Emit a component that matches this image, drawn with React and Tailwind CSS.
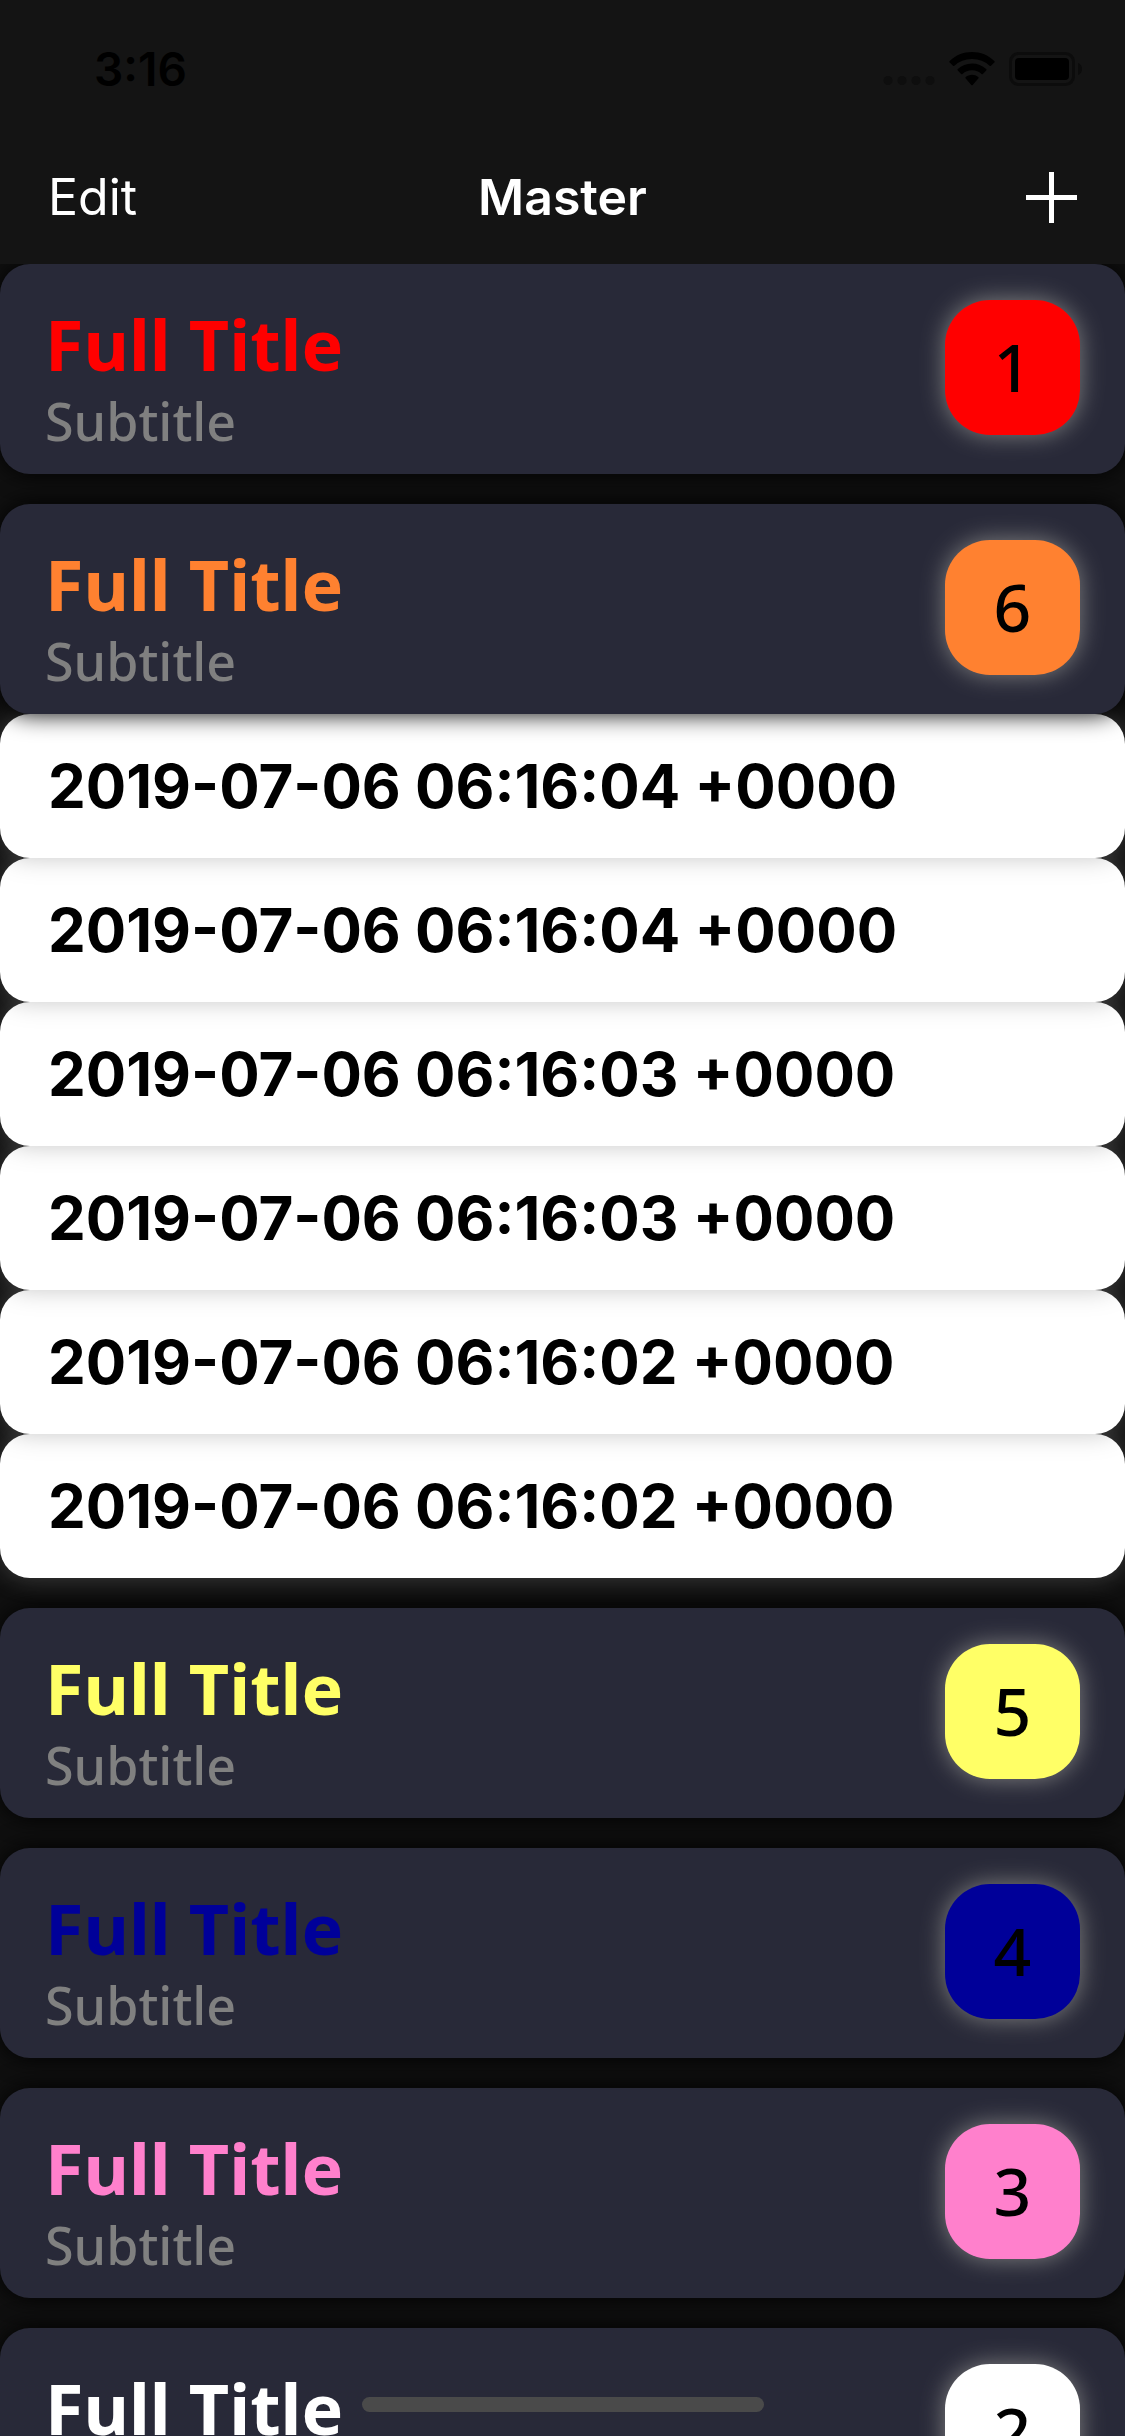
const groups = [
  { id: 'red', count: 1, title: 'text-[#ff0000]', badge: 'bg-[#ff0000]' },
  {
    id: 'orange', count: 6, title: 'text-[#ff8130]', badge: 'bg-[#ff8130]',
    entries: [
      '2019-07-06 06:16:04 +0000',
      '2019-07-06 06:16:04 +0000',
      '2019-07-06 06:16:03 +0000',
      '2019-07-06 06:16:03 +0000',
      '2019-07-06 06:16:02 +0000',
      '2019-07-06 06:16:02 +0000',
    ],
  },
  { id: 'yellow', count: 5, title: 'text-[#ffff66]', badge: 'bg-[#ffff66]' },
  { id: 'blue', count: 4, title: 'text-[#000099]', badge: 'bg-[#000099]' },
  { id: 'pink', count: 3, title: 'text-[#ff80cc]', badge: 'bg-[#ff80cc]' },
  { id: 'white', count: 2, title: 'text-white', badge: 'bg-white' },
];

function StatusBar() {
  return (
    <div className="flex h-[138px] items-center justify-between pr-[42px] pl-[94px] text-black">
      <span className="text-[46px] leading-none font-semibold">3:16</span>
      <div className="flex items-center gap-[14px]">
        <svg width="52" height="34" viewBox="0 0 52 34" aria-hidden="true">
          <g fill="#0e0e0e">
            <circle cx="5" cy="28.500" r="4.500" />
            <circle cx="19" cy="28.500" r="4.500" />
            <circle cx="33" cy="28.500" r="4.500" />
            <circle cx="47" cy="28.500" r="4.500" />
          </g>
        </svg>
        <svg width="46" height="34" viewBox="0 0 46 34" aria-hidden="true">
          <path d="M23 0C14.400 0 6.500 3.300 0.700 8.900a1 1 0 0 0 0 1.500l3.300 3.300a1 1 0 0 0 1.400 0A25.500 25.500 0 0 1 23 7a25.500 25.500 0 0 1 17.600 6.700 1 1 0 0 0 1.400 0l3.300-3.300a1 1 0 0 0 0-1.500C39.500 3.300 31.600 0 23 0Z" />
          <path d="M23 11.500c-5.500 0-10.500 2.100-14.200 5.600a1 1 0 0 0 0 1.500l3.300 3.300a1 1 0 0 0 1.400 0A14 14 0 0 1 23 18.300a14 14 0 0 1 9.500 3.600 1 1 0 0 0 1.400 0l3.300-3.300a1 1 0 0 0 0-1.500A20.600 20.600 0 0 0 23 11.500Z" />
          <path d="M23 22.800c-2.400 0-4.600.9-6.300 2.300a1 1 0 0 0 0 1.500l5.600 6.400a1 1 0 0 0 1.400 0l5.600-6.400a1 1 0 0 0 0-1.500A9.800 9.800 0 0 0 23 22.800Z" />
        </svg>
        <svg width="74" height="34" viewBox="0 0 74 34" aria-hidden="true">
          <rect x="1.500" y="1.500" width="63" height="31" rx="8" fill="none" stroke="#0c0c0c" strokeWidth="3" />
          <rect x="6" y="6" width="54" height="22" rx="4" />
          <path d="M69 11c2.600 1 4 3.300 4 6s-1.400 5-4 6Z" fill="#0c0c0c" />
        </svg>
      </div>
    </div>
  );
}

function NavBar() {
  return (
    <nav className="grid h-[126px] grid-cols-3 items-center px-12 pb-2 text-[50px] leading-none text-white">
      <button type="button" className="justify-self-start">Edit</button>
      <h1 className="justify-self-center font-semibold">Master</h1>
      <button type="button" aria-label="Add" className="justify-self-end">
        <svg width="51" height="51" viewBox="0 0 51 51" className="block" aria-hidden="true">
          <path d="M23 0h5v51h-5zM0 23h51v5H0z" fill="currentColor" />
        </svg>
      </button>
    </nav>
  );
}

function GroupCard({ group }) {
  return (
    <button
      type="button"
      aria-expanded={Boolean(group.entries)}
      className="relative z-10 flex h-[210px] w-full shrink-0 items-start justify-between rounded-[30px] bg-[#282938] pt-9 pr-[45px] pl-[45px] text-left font-['Noto_Sans','Open_Sans',sans-serif] shadow-[0_0_24px_#000]"
    >
      <span className="flex flex-col">
        <span className={'text-[70px] leading-[88px] font-bold ' + group.title}>Full Title</span>
        <span className="text-[52px] leading-[66px] font-medium text-[#808080]">Subtitle</span>
      </span>
      <span className={'flex size-[135px] items-center justify-center rounded-[45px] pb-1 text-[66px] leading-none font-medium text-black shadow-[0_0_24px_#808080] ' + group.badge}>
        {group.count}
      </span>
    </button>
  );
}

export default function App() {
  return (
    <div className="relative flex h-screen flex-col overflow-hidden bg-[#101010] font-['Inter',sans-serif]">
      <header className="relative z-20 shrink-0 bg-[#141414]">
        <StatusBar />
        <NavBar />
      </header>
      <main className="relative z-0 flex min-h-0 flex-1 flex-col gap-[30px] overflow-y-auto [scrollbar-width:none]">
        {groups.map((group, i) => (
          <section key={group.id} className="relative shrink-0" style={{ zIndex: groups.length - i }}>
            <GroupCard group={group} />
            {group.entries && (
              <ul>
                {group.entries.map((entry, n) => (
                  <li
                    key={n}
                    className="relative flex h-36 items-center rounded-[30px] bg-white px-12 text-[60px] leading-none font-bold text-black shadow-[0_0_24px_#80808070]"
                    style={{ zIndex: group.entries.length - n }}
                  >
                    {entry}
                  </li>
                ))}
              </ul>
            )}
          </section>
        ))}
      </main>
      <div className="absolute bottom-6 left-1/2 z-30 h-[15px] w-[402px] -translate-x-1/2 rounded-full bg-[#4a4a4a]" />
    </div>
  );
}
